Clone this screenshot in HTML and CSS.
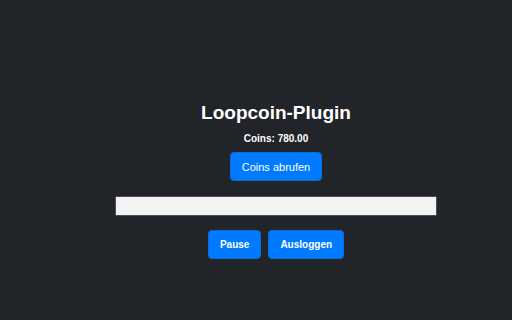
FILE: index.html
```html
<!DOCTYPE html>
<html lang="de">
<head>
    <meta charset="UTF-8">
    <meta name="viewport" content="width=device-width, initial-scale=1.0">
    <title>Loopcoin-Plugin</title>
    <link rel="stylesheet" href="styles.css">
</head>
<body>
    <div class="container">
        <h1>Loopcoin-Plugin</h1>
        <p class="coins">Coins: <span id="coins">780.00</span></p>
        <button class="btn btn-fetch">Coins abrufen</button>
        <div class="progress"></div>
        <div class="actions">
            <button class="btn btn-bold">Pause</button>
            <button class="btn btn-bold">Ausloggen</button>
        </div>
    </div>
</body>
</html>
```

FILE: styles.css
```css
body {
    background-color: #212529;
    color: #ffffff;
    font-family: "Liberation Sans", Arial, sans-serif;
    margin: 0;
    padding-left: 40px;
}
.container {
    display: flex;
    flex-direction: column;
    align-items: center;
    padding-top: 101px;
}
.container h1 {
    font-size: 19px;
    font-weight: bold;
    margin: 0;
    line-height: 24px;
}
.coins {
    font-size: 10px;
    font-weight: bold;
    margin: 7px 0 0;
    line-height: 14px;
}
.btn {
    background-color: #007bff;
    color: #ffffff;
    border: 1px solid #0a6ed8;
    border-radius: 4px;
    font-family: "Liberation Sans", Arial, sans-serif;
    font-size: 11px;
    height: 29px;
    padding: 0 11px;
    cursor: pointer;
}
.btn-fetch {
    margin-top: 6px;
}
.btn-bold {
    font-size: 10px;
    font-weight: bold;
}
.progress {
    width: 320px;
    height: 18px;
    margin-top: 15px;
    background-color: #f3f3f3;
    border: 1px solid #4a4f55;
}
.actions {
    display: flex;
    gap: 7px;
    margin-top: 14px;
}
```
